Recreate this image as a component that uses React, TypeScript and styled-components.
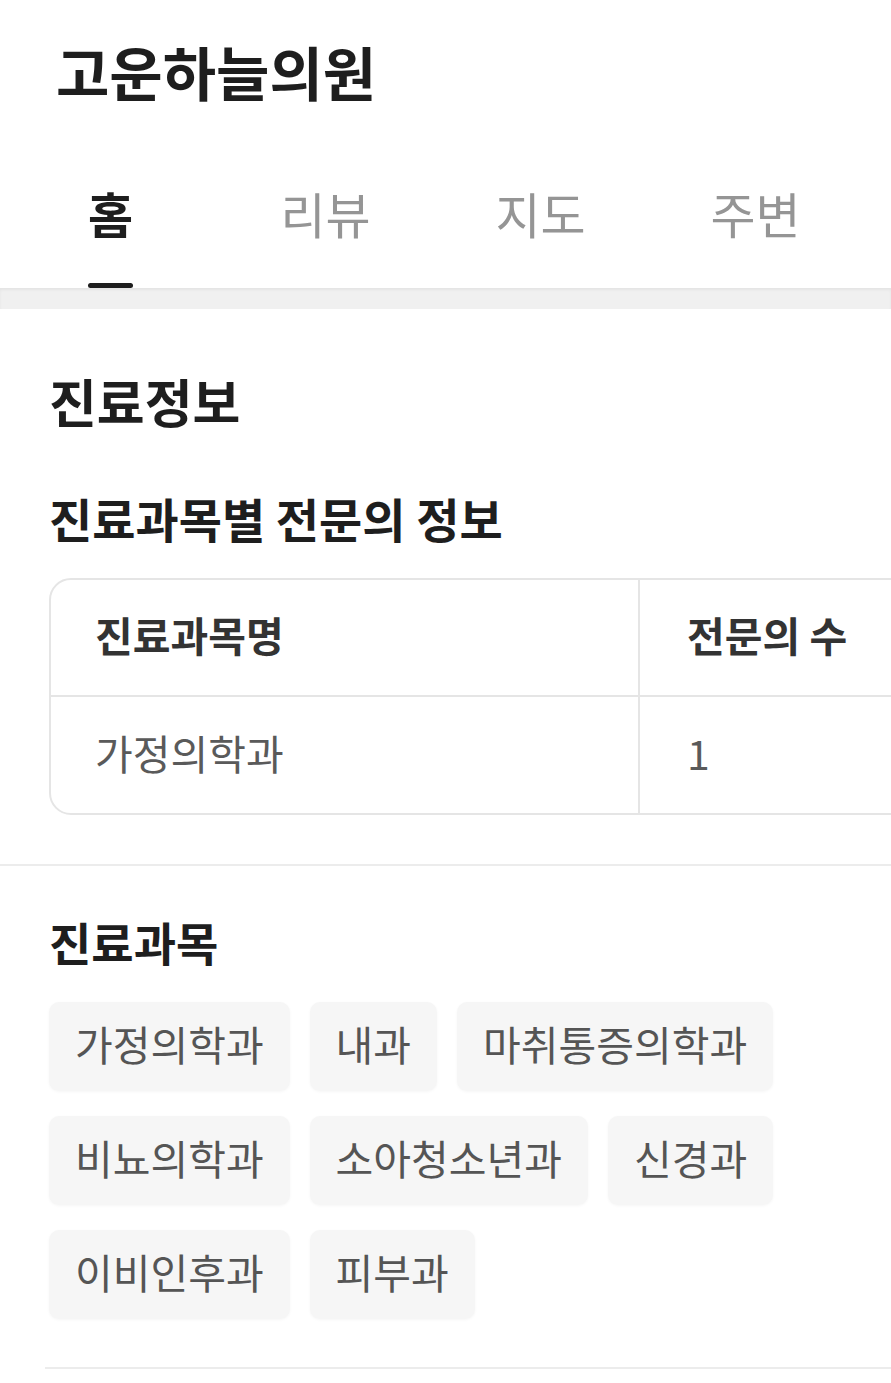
import styled, { createGlobalStyle } from "styled-components";

const GlobalStyle = createGlobalStyle`
  html, body {
    margin: 0;
    padding: 0;
    background: #ffffff;
    overflow-x: hidden;
  }
  body {
    font-family: "Noto Sans CJK KR", "Noto Sans", sans-serif;
    color: #1e1e1e;
  }
`;

const Page = styled.div`
  width: 891px;
  overflow: hidden;
  background: #ffffff;
`;

const Header = styled.header`
  padding: 42px 0 0 56px;
`;

const Title = styled.h1`
  margin: 0;
  font-size: 58px;
  line-height: 1;
  font-weight: 700;
  color: #1e1e1e;
`;

const TabBar = styled.nav`
  display: grid;
  grid-template-columns: repeat(4, 215px);
  padding: 88px 0 0 3px;
`;

const Tab = styled.div`
  display: flex;
  justify-content: center;
`;

const TabInner = styled.div`
  display: inline-flex;
  flex-direction: column;
  align-items: stretch;
`;

const TabLabel = styled.span<{ $active?: boolean }>`
  font-size: 49px;
  line-height: 1;
  font-weight: ${(p) => (p.$active ? 700 : 400)};
  color: ${(p) => (p.$active ? "#1e1e1e" : "#959595")};
`;

const TabUnderline = styled.span<{ $active?: boolean }>`
  height: 5px;
  margin-top: 46px;
  border-radius: 3px;
  background: ${(p) => (p.$active ? "#1e1e1e" : "transparent")};
`;

const Divider = styled.div`
  height: 21px;
  background: #f0f0f0;
  box-shadow: inset 0 2px 3px rgba(0, 0, 0, 0.05);
`;

const Section = styled.section<{ $top: number }>`
  padding: ${(p) => p.$top}px 0 0 49px;
`;

const SectionTitle = styled.h2<{ $size: number }>`
  margin: 0;
  font-size: ${(p) => p.$size}px;
  line-height: 1;
  font-weight: 700;
  color: #1e1e1e;
`;

const SubTitle = styled.h3`
  margin: 67px 0 0;
  font-size: 47px;
  line-height: 1;
  font-weight: 700;
  color: #1e1e1e;
`;

const Table = styled.div`
  margin-top: 37px;
  width: 1000px;
  border: 2px solid #e5e5e5;
  border-radius: 22px;
  overflow: hidden;
`;

const TableRow = styled.div<{ $head?: boolean }>`
  display: grid;
  grid-template-columns: 587px 1fr;
  height: ${(p) => (p.$head ? 115 : 116)}px;
  border-top: ${(p) => (p.$head ? "none" : "2px solid #e5e5e5")};
`;

const Cell = styled.div<{ $head?: boolean; $last?: boolean }>`
  display: flex;
  align-items: center;
  padding: 0 0 6px ${(p) => (p.$last ? 47 : 44)}px;
  border-left: ${(p) => (p.$last ? "2px solid #e5e5e5" : "none")};
  font-size: 41px;
  line-height: 1;
  font-weight: ${(p) => (p.$head ? 700 : 400)};
  color: ${(p) => (p.$head ? "#333333" : "#5a5a5a")};
`;

const Rule = styled.div<{ $inset?: number }>`
  height: 2px;
  margin-left: ${(p) => p.$inset ?? 0}px;
  background: #ececec;
`;

const ChipList = styled.div`
  display: flex;
  flex-wrap: wrap;
  gap: 25px 20px;
  width: 740px;
  margin-top: 38px;
`;

const Chip = styled.span`
  display: flex;
  align-items: center;
  box-sizing: border-box;
  height: 89px;
  padding: 0 26px 7px;
  border-radius: 10px;
  background: #f6f6f6;
  box-shadow: 0 1px 3px rgba(0, 0, 0, 0.04);
  font-size: 41px;
  line-height: 1;
  color: #555555;
`;

const tabs = ["홈", "리뷰", "지도", "주변"];
const departments = [
  "가정의학과",
  "내과",
  "마취통증의학과",
  "비뇨의학과",
  "소아청소년과",
  "신경과",
  "이비인후과",
  "피부과",
];

export default function App() {
  return (
    <Page>
      <GlobalStyle />
      <Header>
        <Title>고운하늘의원</Title>
      </Header>
      <TabBar>
        {tabs.map((t, i) => (
          <Tab key={t}>
            <TabInner>
              <TabLabel $active={i === 0}>{t}</TabLabel>
              <TabUnderline $active={i === 0} />
            </TabInner>
          </Tab>
        ))}
      </TabBar>
      <Divider />

      <Section $top={66}>
        <SectionTitle $size={52}>진료정보</SectionTitle>
        <SubTitle>진료과목별 전문의 정보</SubTitle>
        <Table>
          <TableRow $head>
            <Cell $head>진료과목명</Cell>
            <Cell $head $last>
              전문의 수
            </Cell>
          </TableRow>
          <TableRow>
            <Cell>가정의학과</Cell>
            <Cell $last>1</Cell>
          </TableRow>
        </Table>
      </Section>

      <Rule style={{ marginTop: 49 }} />

      <Section $top={52}>
        <SectionTitle $size={46}>진료과목</SectionTitle>
        <ChipList>
          {departments.map((d) => (
            <Chip key={d}>{d}</Chip>
          ))}
        </ChipList>
      </Section>

      <Rule $inset={45} style={{ marginTop: 48 }} />
    </Page>
  );
}
